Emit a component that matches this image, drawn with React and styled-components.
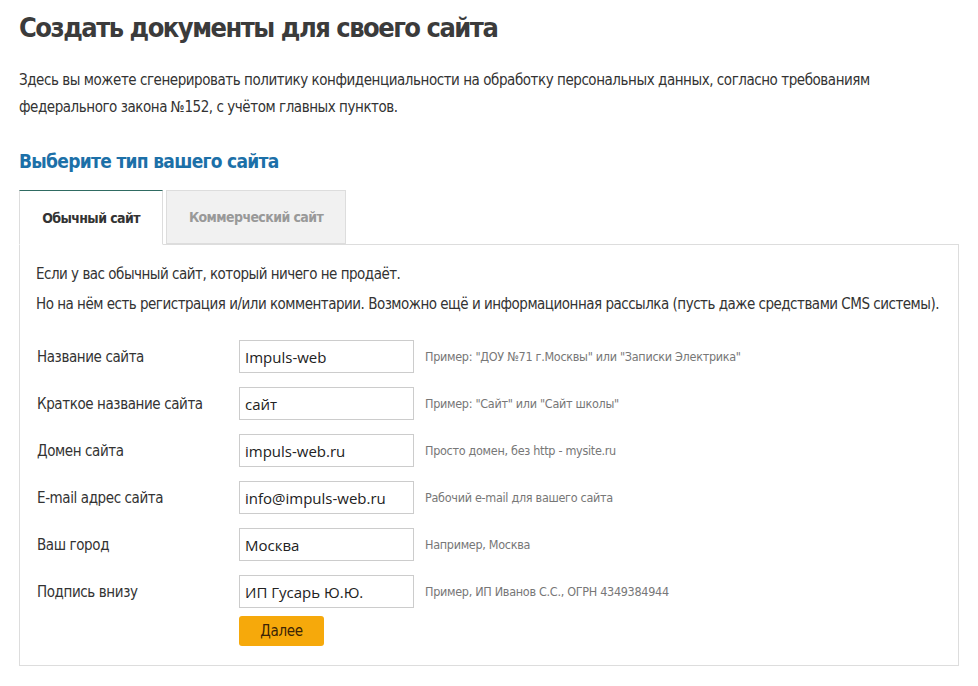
import React, { useState } from 'react';
import styled, { createGlobalStyle } from 'styled-components';

const Global = createGlobalStyle`
  body {
    margin: 0;
    background: #fff;
    font-family: "DejaVu Sans Condensed", "Liberation Sans", sans-serif;
    color: #333;
  }
`;

const Page = styled.div`
  padding: 9px 20px 20px 19px;
`;

const Title = styled.h1`
  margin: 0;
  font-size: 27px;
  letter-spacing: -1.5px;
  font-weight: 700;
  color: #3b3b3b;
  line-height: 38px;
`;

const Lead = styled.p`
  margin: 20px 0 0;
  font-size: 15px;
  letter-spacing: -0.45px;
  line-height: 27px;
  color: #333;
`;

const Subtitle = styled.h2`
  margin: 26px 0 0;
  font-size: 19px;
  letter-spacing: -0.7px;
  line-height: 28px;
  font-weight: 700;
  color: #1c70a8;
`;

const Tabs = styled.div`
  display: flex;
  align-items: flex-end;
  gap: 3px;
  margin-top: 15px;
`;

const Tab = styled.button`
  font-family: inherit;
  font-size: 14px;
  letter-spacing: -0.6px;
  font-weight: 700;
  width: ${p => p.$width}px;
  height: ${p => (p.$active ? '55px' : '54px')};
  padding: 0;
  cursor: pointer;
  margin-bottom: ${p => (p.$active ? '-1px' : '0')};
  color: ${p => (p.$active ? '#333' : '#999')};
  background: ${p => (p.$active ? '#fff' : '#f1f1f1')};
  border: 1px solid #ddd;
  border-top: 1px solid ${p => (p.$active ? '#2f6b62' : '#ddd')};
  border-bottom: ${p => (p.$active ? '1px solid #fff' : '1px solid #ddd')};
`;

const Panel = styled.div`
  width: 940px;
  box-sizing: border-box;
  border: 1px solid #ddd;
  padding: 14px 16px 19px 16px;
`;

const Note = styled.p`
  margin: 0;
  font-size: 15px;
  letter-spacing: -0.5px;
  line-height: 30px;
  white-space: nowrap;
`;

const Form = styled.form`
  margin-top: 21px;
  display: flex;
  flex-direction: column;
  gap: 14px;
`;

const Row = styled.div`
  display: grid;
  grid-template-columns: 191px 175px auto;
  align-items: center;
  column-gap: 11px;
  padding-left: 1px;
`;

const Label = styled.label`
  font-size: 15px;
  letter-spacing: -0.4px;
  color: #333;
`;

const Input = styled.input`
  box-sizing: border-box;
  width: 175px;
  height: 33px;
  border: 1px solid #ccc;
  padding: 0 5px;
  font-family: "Open Sans", "DejaVu Sans", sans-serif;
  font-size: 15px;
  color: #222;
  outline: none;
`;

const Hint = styled.span`
  font-size: 12.5px;
  letter-spacing: -0.3px;
  color: #777;
`;

const Submit = styled.button`
  display: block;
  margin: 8px 0 0 203px;
  width: 85px;
  height: 30px;
  background: #f6a90b;
  border: none;
  border-radius: 3px;
  font-family: inherit;
  font-size: 15px;
  letter-spacing: -0.3px;
  color: #3b2406;
  cursor: pointer;
`;

const fields = [
  ['Название сайта', 'Impuls-web', 'Пример: "ДОУ №71 г.Москвы" или "Записки Электрика"'],
  ['Краткое название сайта', 'сайт', 'Пример: "Сайт" или "Сайт школы"'],
  ['Домен сайта', 'impuls-web.ru', 'Просто домен, без http - mysite.ru'],
  ['E-mail адрес сайта', 'info@impuls-web.ru', 'Рабочий e-mail для вашего сайта'],
  ['Ваш город', 'Москва', 'Например, Москва'],
  ['Подпись внизу', 'ИП Гусарь Ю.Ю.', 'Пример, ИП Иванов С.С., ОГРН 4349384944'],
];

export default function App() {
  const [tab, setTab] = useState(0);
  return (
    <Page>
      <Global />
      <Title>Создать документы для своего сайта</Title>
      <Lead>
        Здесь вы можете сгенерировать политику конфиденциальности на обработку персональных данных, согласно требованиям
        <br />
        федерального закона №152, с учётом главных пунктов.
      </Lead>
      <Subtitle>Выберите тип вашего сайта</Subtitle>
      <Tabs>
        <Tab $width={144} $active={tab === 0} onClick={() => setTab(0)}>Обычный сайт</Tab>
        <Tab $width={180} $active={tab === 1} onClick={() => setTab(1)}>Коммерческий сайт</Tab>
      </Tabs>
      <Panel>
        <Note>Если у вас обычный сайт, который ничего не продаёт.</Note>
        <Note>Но на нём есть регистрация и/или комментарии. Возможно ещё и информационная рассылка (пусть даже средствами CMS системы).</Note>
        <Form onSubmit={e => e.preventDefault()}>
          {fields.map(([label, value, hint]) => (
            <Row key={label}>
              <Label>{label}</Label>
              <Input defaultValue={value} />
              <Hint>{hint}</Hint>
            </Row>
          ))}
        </Form>
        <Submit type="button">Далее</Submit>
      </Panel>
    </Page>
  );
}
